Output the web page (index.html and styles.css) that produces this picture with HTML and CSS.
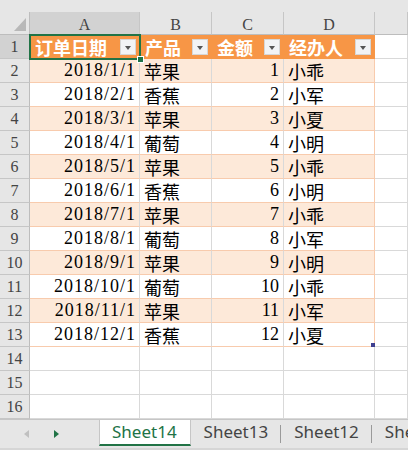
FILE: index.html
```html
<!DOCTYPE html>
<html lang="zh-CN">
<head>
    <meta charset="UTF-8">
    <title>订单表</title>
    <link rel="stylesheet" href="styles.css">
</head>
<body>

<div class="strip"></div>

<div class="sheet">
    <!-- column headers -->
    <div class="corner"></div>
    <div class="colhead sel">A</div>
    <div class="colhead">B</div>
    <div class="colhead">C</div>
    <div class="colhead">D</div>
    <div class="colhead"></div>

    <!-- table header row -->
    <div class="row">
        <div class="rowhead sel">1</div>
        <div class="th active">订单日期<span class="filter"></span></div>
        <div class="th">产品<span class="filter"></span></div>
        <div class="th">金额<span class="filter"></span></div>
        <div class="th">经办人<span class="filter"></span></div>
        <div class="blank"></div>
    </div>

    <div class="row band">
        <div class="rowhead">2</div>
        <div class="cell date">2018/1/1</div><div class="cell">苹果</div><div class="cell num">1</div><div class="cell last">小乖</div>
        <div class="blank"></div>
    </div>
    <div class="row">
        <div class="rowhead">3</div>
        <div class="cell date">2018/2/1</div><div class="cell">香蕉</div><div class="cell num">2</div><div class="cell last">小军</div>
        <div class="blank"></div>
    </div>
    <div class="row band">
        <div class="rowhead">4</div>
        <div class="cell date">2018/3/1</div><div class="cell">苹果</div><div class="cell num">3</div><div class="cell last">小夏</div>
        <div class="blank"></div>
    </div>
    <div class="row">
        <div class="rowhead">5</div>
        <div class="cell date">2018/4/1</div><div class="cell">葡萄</div><div class="cell num">4</div><div class="cell last">小明</div>
        <div class="blank"></div>
    </div>
    <div class="row band">
        <div class="rowhead">6</div>
        <div class="cell date">2018/5/1</div><div class="cell">苹果</div><div class="cell num">5</div><div class="cell last">小乖</div>
        <div class="blank"></div>
    </div>
    <div class="row">
        <div class="rowhead">7</div>
        <div class="cell date">2018/6/1</div><div class="cell">香蕉</div><div class="cell num">6</div><div class="cell last">小明</div>
        <div class="blank"></div>
    </div>
    <div class="row band">
        <div class="rowhead">8</div>
        <div class="cell date">2018/7/1</div><div class="cell">苹果</div><div class="cell num">7</div><div class="cell last">小乖</div>
        <div class="blank"></div>
    </div>
    <div class="row">
        <div class="rowhead">9</div>
        <div class="cell date">2018/8/1</div><div class="cell">葡萄</div><div class="cell num">8</div><div class="cell last">小军</div>
        <div class="blank"></div>
    </div>
    <div class="row band">
        <div class="rowhead">10</div>
        <div class="cell date">2018/9/1</div><div class="cell">苹果</div><div class="cell num">9</div><div class="cell last">小明</div>
        <div class="blank"></div>
    </div>
    <div class="row">
        <div class="rowhead">11</div>
        <div class="cell date">2018/10/1</div><div class="cell">葡萄</div><div class="cell num">10</div><div class="cell last">小乖</div>
        <div class="blank"></div>
    </div>
    <div class="row band">
        <div class="rowhead">12</div>
        <div class="cell date">2018/11/1</div><div class="cell">苹果</div><div class="cell num">11</div><div class="cell last">小军</div>
        <div class="blank"></div>
    </div>
    <div class="row">
        <div class="rowhead">13</div>
        <div class="cell date">2018/12/1</div><div class="cell">香蕉</div><div class="cell num">12</div><div class="cell last corner-handle">小夏</div>
        <div class="blank"></div>
    </div>

    <!-- empty rows -->
    <div class="row">
        <div class="rowhead">14</div>
        <div class="blank"></div><div class="blank"></div><div class="blank"></div><div class="blank"></div><div class="blank"></div>
    </div>
    <div class="row">
        <div class="rowhead">15</div>
        <div class="blank"></div><div class="blank"></div><div class="blank"></div><div class="blank"></div><div class="blank"></div>
    </div>
    <div class="row">
        <div class="rowhead">16</div>
        <div class="blank"></div><div class="blank"></div><div class="blank"></div><div class="blank"></div><div class="blank"></div>
    </div>
</div>

<!-- sheet tabs -->
<div class="tabbar">
    <div class="nav">
        <span class="arrow prev"></span>
        <span class="arrow next"></span>
    </div>
    <div class="tab current">Sheet14</div>
    <div class="tab">Sheet13</div>
    <div class="tab">Sheet12</div>
    <div class="tab">Sheet11</div>
</div>

</body>
</html>
```

FILE: styles.css
```css
body {
    margin: 0;
    background-color: #fff;
    width: 408px;
    height: 450px;
    overflow: hidden;
}
.strip {
    height: 12px;
    background-color: #e6e6e6;
}

/* Grid of cells */
.sheet {
    display: grid;
    grid-template-columns: 30px 110px 72px 72px 91px 1fr;
    grid-template-rows: 23px;
    grid-auto-rows: 24px;
    font-family: "Liberation Serif", "Noto Sans CJK SC", serif;
    color: #000;
}
.row {
    display: contents;
}
.sheet > div, .row > div {
    box-sizing: border-box;
    border-right: 1px solid #d9d9d9;
    border-bottom: 1px solid #d9d9d9;
    min-width: 0;
}
.corner {
    position: relative;
    background-color: #e6e6e6;
    border-right-color: #bdbdbd !important;
    border-bottom-color: #bdbdbd !important;
}
.corner::after {
    content: "";
    position: absolute;
    right: 3px;
    bottom: 3px;
    width: 12px;
    height: 13px;
    background-color: #b8b8b8;
    clip-path: polygon(100% 0, 100% 100%, 0 100%);
}
.colhead {
    background-color: #e6e6e6;
    border-right-color: #c6c6c6 !important;
    border-bottom-color: #bdbdbd !important;
    color: #444;
    font-size: 16px;
    text-align: center;
    line-height: 25px;
}
.rowhead {
    background-color: #e6e6e6;
    border-right-color: #bdbdbd !important;
    border-bottom-color: #c6c6c6 !important;
    color: #444;
    font-size: 16px;
    text-align: center;
    line-height: 24px;
}
.colhead.sel, .rowhead.sel {
    background-color: #d2d2d2;
}

/* Table header */
.th {
    display: flex;
    align-items: center;
    justify-content: space-between;
    padding: 0 3px 0 5px;
    background-color: #f79646;
    border-right-color: #f79646 !important;
    border-bottom-color: #f79646 !important;
    color: #fff;
    font-size: 18px;
    font-weight: bold;
}
.filter {
    position: relative;
    width: 16px;
    height: 16px;
    box-sizing: border-box;
    border: 1px solid #d6d6d6;
    background-color: #f2f3f5;
}
.filter::after {
    content: "";
    position: absolute;
    left: 4px;
    top: 6px;
    border-left: 3.5px solid transparent;
    border-right: 3.5px solid transparent;
    border-top: 4px solid #555;
}

/* selected cell A1 */
.th.active {
    position: relative;
}
.th.active::before {
    content: "";
    position: absolute;
    left: -1px;
    top: -1px;
    width: 112px;
    height: 26px;
    box-sizing: border-box;
    border: 2px solid #217346;
    z-index: 2;
}
.th.active::after {
    content: "";
    position: absolute;
    left: 107px;
    top: 21px;
    width: 5px;
    height: 5px;
    background-color: #217346;
    border: 1px solid #fff;
    z-index: 3;
}

/* Table body */
.cell {
    display: flex;
    align-items: center;
    padding: 0 4px;
    font-size: 18px;
    white-space: nowrap;
    border-bottom-color: #f8cbad !important;
}
.cell.last {
    border-right-color: #f8cbad !important;
}
.band .cell {
    background-color: #fde9d9;
}
.date {
    justify-content: flex-end;
    letter-spacing: 1px;
    padding-right: 3px;
}
.num {
    justify-content: flex-end;
}
.corner-handle {
    position: relative;
}
.corner-handle::after {
    content: "";
    position: absolute;
    right: -1px;
    bottom: -1px;
    width: 4px;
    height: 4px;
    background-color: #3f3f8f;
}

/* Sheet tabs */
.tabbar {
    display: flex;
    height: 31px;
    box-sizing: border-box;
    border-top: 1px solid #c6c6c6;
    border-bottom: 2px solid #d6d6d6;
    background-color: #e6e6e6;
    font-family: "Noto Sans", sans-serif;
    font-size: 17px;
    color: #444;
    white-space: nowrap;
}
.nav {
    flex: 0 0 99px;
    display: flex;
    align-items: center;
    gap: 25px;
    padding-left: 24px;
    box-sizing: border-box;
}
.arrow {
    width: 0;
    height: 0;
    border-top: 4px solid transparent;
    border-bottom: 4px solid transparent;
}
.arrow.prev {
    border-right: 5px solid #c0c0c0;
}
.arrow.next {
    border-left: 5px solid #217346;
}
.tab {
    height: 26px;
    line-height: 24px;
    padding: 0 13px;
    box-sizing: border-box;
    position: relative;
}
.tab::after {
    content: "";
    position: absolute;
    right: 0;
    top: 5px;
    height: 18px;
    border-right: 1px solid #9a9a9a;
}
.tab.current {
    background-color: #fff;
    color: #217346;
    border-left: 1px solid #c6c6c6;
    border-right: 1px solid #c6c6c6;
    border-bottom: 2px solid #217346;
    padding: 0 13px 0 12px;
}
.tab.current::after {
    display: none;
}
```
